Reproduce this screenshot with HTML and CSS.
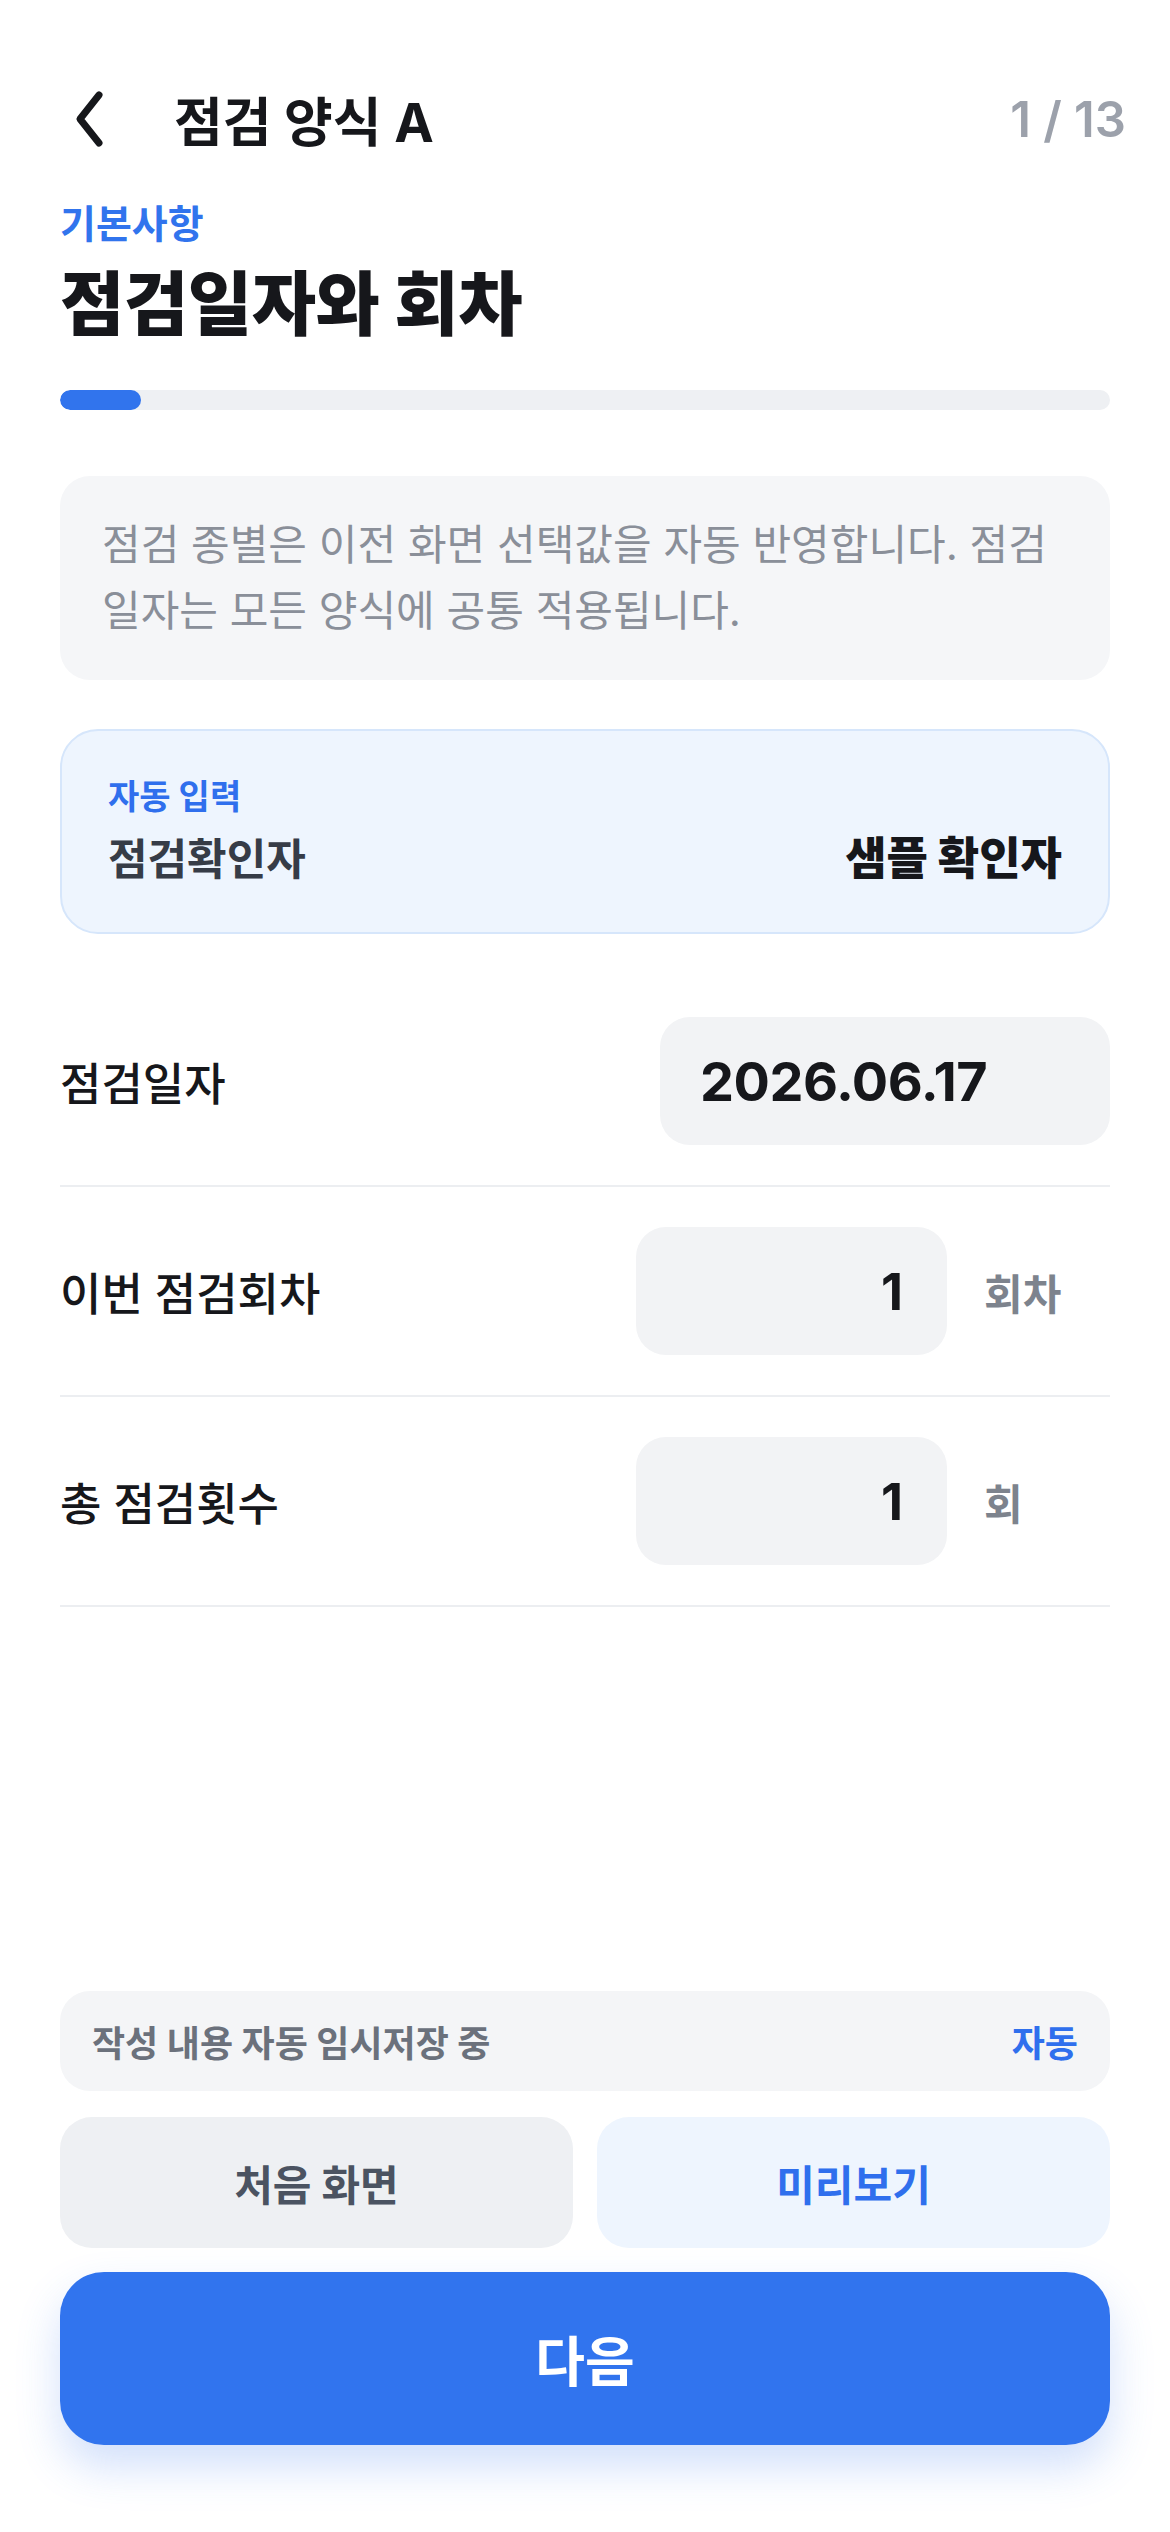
FILE: index.html
```html
<!DOCTYPE html>
<html lang="ko">
<head>
    <meta charset="UTF-8" />
    <meta name="viewport" content="width=device-width, initial-scale=1.0" />
    <title>점검 양식 A</title>
    <link rel="stylesheet" href="styles.css">
</head>
<body>
    <div class="screen">
        <header class="top-bar">
            <button class="back-btn" aria-label="뒤로">
                <svg width="44" height="60" viewBox="0 0 44 60">
                    <polyline points="31,6 12,30 31,54" fill="none" stroke="#16171b" stroke-width="7" stroke-linecap="round" stroke-linejoin="round" />
                </svg>
            </button>
            <h1 class="form-title">점검 양식 A</h1>
            <span class="page-count">1 / 13</span>
        </header>

        <div class="section-label">기본사항</div>
        <h2 class="section-title">점검일자와 회차</h2>

        <div class="progress">
            <div class="progress-fill" style="width: 7.7%"></div>
        </div>

        <p class="notice">점검 종별은 이전 화면 선택값을 자동 반영합니다. 점검일자는 모든 양식에 공통 적용됩니다.</p>

        <div class="auto-card">
            <div class="auto-tag">자동 입력</div>
            <div class="auto-row">
                <span class="auto-name">점검확인자</span>
                <span class="auto-value">샘플 확인자</span>
            </div>
        </div>

        <div class="field-row">
            <span class="field-label">점검일자</span>
            <div class="field-input date-input">2026.06.17</div>
        </div>
        <div class="field-row">
            <span class="field-label">이번 점검회차</span>
            <div class="field-group">
                <div class="field-input num-input">1</div>
                <span class="unit">회차</span>
            </div>
        </div>
        <div class="field-row">
            <span class="field-label">총 점검횟수</span>
            <div class="field-group">
                <div class="field-input num-input">1</div>
                <span class="unit">회</span>
            </div>
        </div>

        <div class="bottom">
            <div class="autosave">
                <span>작성 내용 자동 임시저장 중</span>
                <span class="autosave-state">자동</span>
            </div>
            <div class="btn-row">
                <button class="btn btn-gray">처음 화면</button>
                <button class="btn btn-light">미리보기</button>
            </div>
            <button class="btn-next">다음</button>
        </div>
    </div>
</body>
</html>
```

FILE: styles.css
```css
body {
    margin: 0;
    background: #ffffff;
    font-family: "Inter", "Noto Sans CJK KR", sans-serif;
    color: #16171b;
}

.screen {
    width: 1170px;
    height: 2532px;
    box-sizing: border-box;
    padding: 73px 60px 87px;
    display: flex;
    flex-direction: column;
}

/* header */
.top-bar {
    height: 92px;
    display: flex;
    align-items: center;
}

.back-btn {
    border: none;
    background: none;
    padding: 0;
    margin-left: 8px;
    width: 44px;
    height: 60px;
    display: flex;
}

.form-title {
    margin: 0 0 0 62px;
    font-size: 53px;
    font-weight: 700;
    flex: 1;
}

.page-count {
    font-size: 49px;
    font-weight: 600;
    color: #9ca1ab;
    margin-right: -16px;
}

.section-label {
    margin-top: 36px;
    font-size: 39px;
    line-height: 46px;
    font-weight: 700;
    color: #3174ed;
}

.section-title {
    margin: 17px 0 0;
    font-size: 70px;
    line-height: 82px;
    font-weight: 800;
    letter-spacing: -0.5px;
}

.progress {
    margin-top: 44px;
    height: 20px;
    border-radius: 10px;
    background: #eef0f3;
    overflow: hidden;
}

.progress-fill {
    height: 100%;
    border-radius: 10px;
    background: #3174ed;
}

.notice {
    margin: 66px 0 0;
    padding: 36px 34px 36px 42px;
    background: #f5f6f8;
    border-radius: 30px;
    font-size: 42px;
    line-height: 66px;
    color: #8a8f99;
}

/* auto-filled card */
.auto-card {
    margin-top: 49px;
    padding: 44px 46px 47px;
    border: 2px solid #d6e6fb;
    border-radius: 38px;
    background: #eef5fe;
}

.auto-tag {
    font-size: 34px;
    line-height: 44px;
    font-weight: 700;
    color: #2f6fed;
}

.auto-row {
    margin-top: 14px;
    display: flex;
    justify-content: space-between;
    align-items: center;
    line-height: 52px;
}

.auto-name {
    font-size: 43px;
    font-weight: 700;
    color: #363c47;
}

.auto-value {
    font-size: 45px;
    font-weight: 800;
    color: #16171b;
}

/* form rows */
.field-row {
    padding: 40px 0;
    border-bottom: 2px solid #eceef1;
    display: flex;
    justify-content: space-between;
    align-items: center;
}

.auto-card + .field-row {
    margin-top: 43px;
}

.field-label {
    font-size: 45px;
    font-weight: 500;
}

.field-group {
    display: flex;
    align-items: center;
}

.field-input {
    height: 128px;
    border-radius: 30px;
    background: #f2f3f5;
    display: flex;
    align-items: center;
    box-sizing: border-box;
    font-weight: 700;
    color: #16171b;
}

.date-input {
    width: 450px;
    padding-left: 40px;
    font-size: 54px;
    letter-spacing: -0.5px;
}

.num-input {
    width: 311px;
    padding-right: 44px;
    justify-content: flex-end;
    font-size: 51px;
}

.unit {
    width: 126px;
    margin-left: 37px;
    font-size: 42px;
    font-weight: 700;
    color: #7d838d;
}

/* bottom actions */
.bottom {
    margin-top: auto;
    display: flex;
    flex-direction: column;
}

.autosave {
    height: 100px;
    padding: 0 32px;
    border-radius: 30px;
    background: #f4f5f7;
    display: flex;
    justify-content: space-between;
    align-items: center;
    font-size: 36px;
    font-weight: 700;
    color: #6b717c;
}

.autosave-state {
    color: #2f6fed;
}

.btn-row {
    margin-top: 26px;
    display: flex;
    gap: 24px;
}

.btn {
    flex: 1;
    height: 131px;
    border: none;
    border-radius: 32px;
    font-family: inherit;
    font-size: 42px;
    font-weight: 700;
}

.btn-gray {
    background: #eef0f3;
    color: #4b5361;
}

.btn-light {
    background: #eef5fe;
    color: #2f6fed;
}

.btn-next {
    margin-top: 24px;
    height: 173px;
    border: none;
    border-radius: 44px;
    background: #3174ee;
    color: #ffffff;
    font-family: inherit;
    font-size: 54px;
    font-weight: 700;
    box-shadow: 0 22px 44px rgba(49, 116, 238, 0.22);
}
```
